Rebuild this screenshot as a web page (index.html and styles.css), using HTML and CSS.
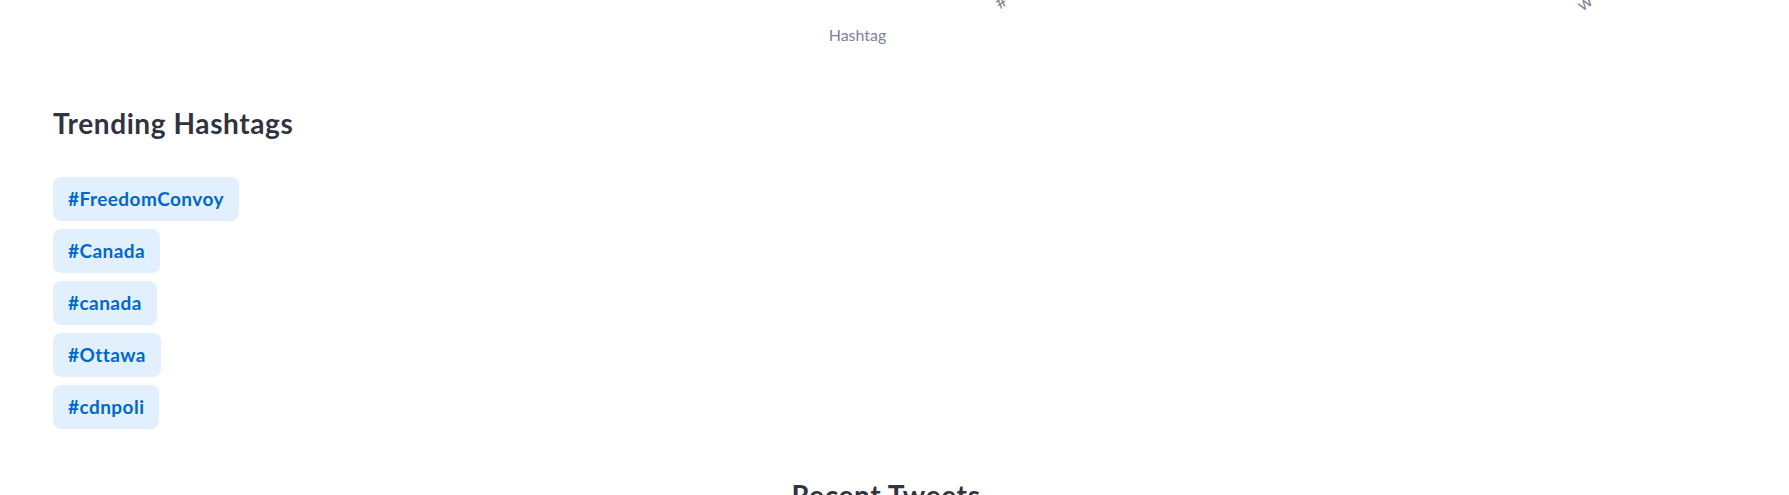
FILE: index.html
```html
<!DOCTYPE html>
<html lang="en">
<head>
<meta charset="utf-8">
<title>Trending Hashtags</title>
<link rel="stylesheet" href="styles.css">
</head>
<body>
<div class="app">
  <section class="chart">
    <span class="tick tick-a">#</span>
    <span class="tick tick-b">.</span>
    <span class="tick tick-c">w</span>
    <div class="axis-title">Hashtag</div>
  </section>

  <section class="trending">
    <h3 class="heading">Trending Hashtags</h3>
    <div class="pills">
      <span class="pill">#FreedomConvoy</span>
      <span class="pill">#Canada</span>
      <span class="pill">#canada</span>
      <span class="pill">#Ottawa</span>
      <span class="pill">#cdnpoli</span>
    </div>
  </section>

  <h3 class="heading recent">Recent Tweets</h3>
</div>
</body>
</html>
```

FILE: styles.css
```css
html, body {
  margin: 0;
  padding: 0;
  background: #ffffff;
}

body {
  font-family: "Lato", "Source Sans Pro", "Liberation Sans", sans-serif;
  color: #31333f;
  overflow: hidden;
}

.app {
  padding: 0 53px;
  display: flex;
  flex-direction: column;
}

.chart {
  position: relative;
  height: 60px;
  overflow: hidden;
}

.axis-title {
  padding-top: 25px;
  padding-right: 74px;
  text-align: center;
  font-size: 16px;
  line-height: 20px;
  color: #7e8294;
}

.tick {
  position: absolute;
  font-size: 18px;
  line-height: 18px;
  color: #7e8294;
  transform: rotate(-35deg);
}

.tick-a { left: 942px; top: -8px; }
.tick-b { left: 1150px; top: -15px; }
.tick-c { left: 1524px; top: -7px; }

.heading {
  margin: 0;
  font-size: 28px;
  line-height: 1.2;
  font-weight: 700;
  color: #31333f;
  letter-spacing: 0.6px;
}

.trending {
  padding-top: 47px;
  display: flex;
  flex-direction: column;
  gap: 36px;
}

.pills {
  display: flex;
  flex-direction: column;
  align-items: flex-start;
  gap: 8px;
}

.pill {
  display: inline-block;
  padding: 10px 15px;
  line-height: 24px;
  font-size: 19px;
  font-weight: 700;
  letter-spacing: 0.45px;
  color: #0068c9;
  background: #e2f0fd;
  border-radius: 8px;
}

.recent {
  margin-top: 50px;
  text-align: center;
  padding-right: 17px;
}
```
